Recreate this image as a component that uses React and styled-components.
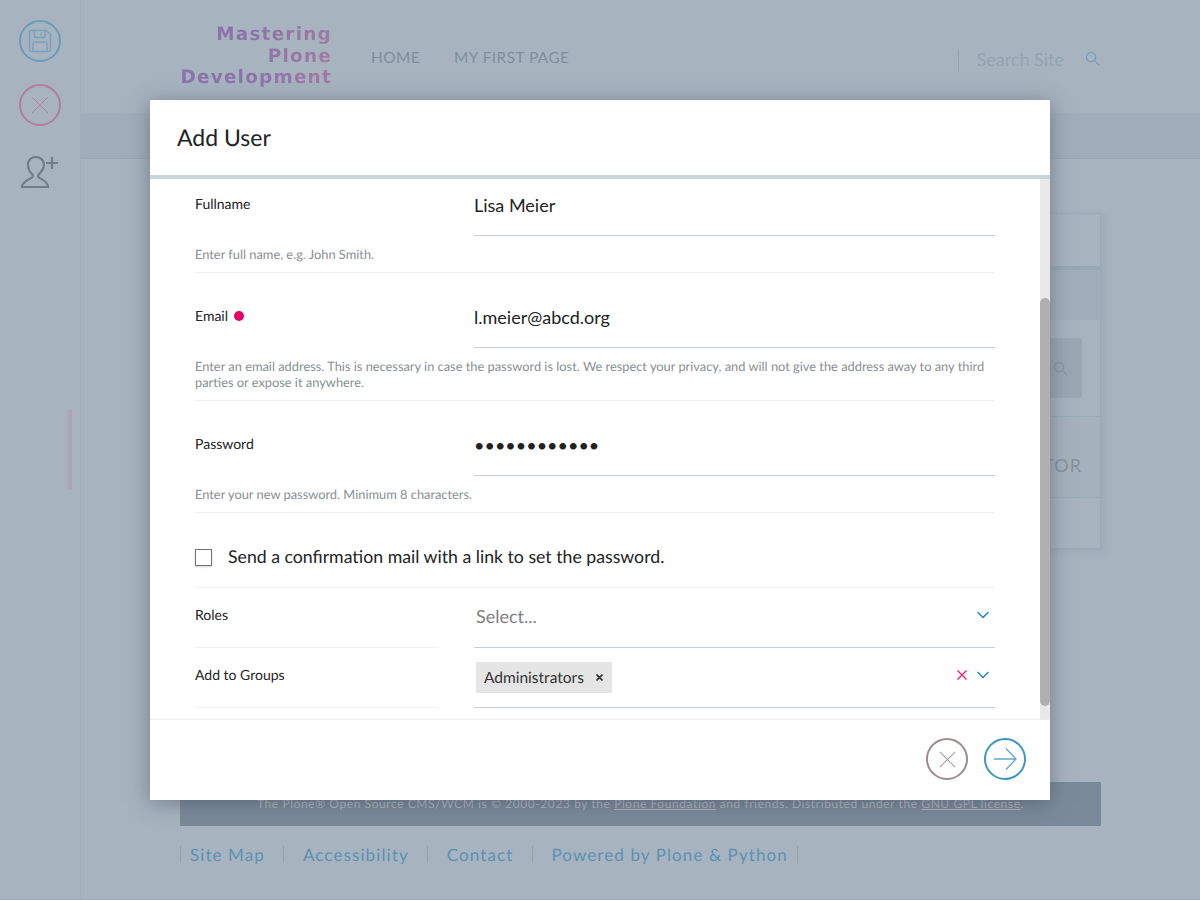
import React from 'react';
import styled, { createGlobalStyle } from 'styled-components';

const GlobalStyle = createGlobalStyle`
  html, body {
    margin: 0;
    padding: 0;
    height: 100%;
    background: #a7b3bf;
    font-family: Lato, "Liberation Sans", sans-serif;
    text-rendering: geometricPrecision;
    overflow: hidden;
  }
  * { box-sizing: border-box; }
`;

const Page = styled.div`
  position: relative;
  display: flex;
  width: 1200px;
  height: 900px;
  overflow: hidden;
  border-bottom: 1px solid #9aa8b5;
`;

/* Dimmed site behind the modal */
const Toolbar = styled.aside`
  flex: 0 0 81px;
  display: flex;
  flex-direction: column;
  align-items: center;
  padding-top: 20px;
  border-right: 1px solid #a0aeba;
`;

const ToolCircle = styled.div`
  width: 42px;
  height: 42px;
  margin-bottom: 22px;
  border-radius: 50%;
  border: 2px solid ${(props) => props.$color};
  display: flex;
  align-items: center;
  justify-content: center;
`;

const ToolUser = styled.svg`
  width: 42px;
  height: 36px;
  margin-top: 7px;
`;

const ToolMark = styled.div`
  align-self: flex-end;
  width: 4px;
  height: 80px;
  margin: 219px 8px 0 0;
  background: #aca3b3;
`;

const Site = styled.div`
  flex: 1;
  display: flex;
  flex-direction: column;
`;

const Header = styled.header`
  height: 113px;
  display: flex;
  align-items: flex-start;
  padding: 24px 100px 0 91px;
`;

const Logo = styled.div`
  width: 160px;
  white-space: nowrap;
  font-family: "DejaVu Sans", sans-serif;
  font-size: 18.4px;
  font-weight: 700;
  line-height: 21.5px;
  letter-spacing: 1.25px;
  text-align: right;
  color: transparent;
  background: linear-gradient(100deg, #8873ae 0%, #8c74a9 50%, #a47aa4 100%);
  -webkit-background-clip: text;
  background-clip: text;
`;

const Nav = styled.nav`
  display: flex;
  gap: 34px;
  margin: 24px 0 0 39px;
`;

const NavItem = styled.span`
  font-size: 15.4px;
  line-height: 20px;
  letter-spacing: 0.45px;
  color: #7f8f9f;
`;

const Search = styled.div`
  margin: 25px 0 0 auto;
  height: 23px;
  display: flex;
  align-items: center;
  padding-left: 17px;
  border-left: 1px solid #94a5b2;
`;

const SearchText = styled.span`
  font-size: 18px;
  line-height: 21px;
  margin: -2px 21px 0 0;
  color: #94a4b2;
`;

const SearchIcon = styled.svg`
  display: block;
  width: 15px;
  height: 15px;
  margin-top: ${(props) => props.$top || 0}px;
`;

const Crumbs = styled.div`
  height: 46px;
  background: #a0aebb;
  border-bottom: 1px solid #98a8b5;
`;

const Main = styled.main`
  flex: 1;
  padding: 54px 99px 0;
`;

const Panel = styled.section`
  width: 921px;
  border: 1px solid #9bacb9;
  box-shadow: 2px 2px 6px rgba(120, 135, 150, 0.25);
`;

const PanelRow = styled.div`
  height: ${(props) => props.$height}px;
  background: ${(props) => props.$bg || 'transparent'};
  border-bottom: ${(props) => props.$border || 'none'};
  display: flex;
  align-items: center;
  justify-content: flex-end;
  padding-right: 18px;
`;

const PanelSearch = styled.div`
  width: 400px;
  height: 60px;
  border-radius: 4px;
  background: #9aa8b4;
  display: flex;
  align-items: center;
  justify-content: flex-end;
  padding-right: 14px;
`;

const PanelText = styled.span`
  font-size: 18px;
  letter-spacing: 1px;
  color: #84949f;
  margin-top: 16px;
`;

const Legal = styled.div`
  margin-left: 99px;
  width: 921px;
  height: 44px;
  display: flex;
  align-items: center;
  justify-content: center;
  padding-bottom: 2px;
  background: #7b8a9a;
  color: #b0bac4;
  font-size: 12px;
  letter-spacing: 0.58px;

  u { text-underline-offset: 1px; }
`;

const FooterLinks = styled.ul`
  display: flex;
  list-style: none;
  margin: 20px 0 36px 99px;
  padding: 0;
  height: 17px;
  align-items: center;
`;

const FooterLink = styled.li`
  height: 17px;
  line-height: 17px;
  padding: 0 18.5px;
  border-left: 1px solid #94a5b2;
  font-size: 17px;
  letter-spacing: 1.1px;
  color: #5b92b2;

  &:first-child { padding-left: 9px; }
  &:last-child { border-right: 1px solid #94a5b2; padding-right: 9px; }
`;

/* Modal */
const Modal = styled.div`
  position: absolute;
  left: 150px;
  top: 100px;
  width: 900px;
  height: 700px;
  display: flex;
  flex-direction: column;
  background: #fff;
  box-shadow: 0 3px 20px rgba(60, 72, 88, 0.5);
`;

const ModalHeader = styled.div`
  flex: 0 0 79px;
  display: flex;
  align-items: center;
  padding: 0 27px 2px;
  border-bottom: 4px solid #c7d6d8;
`;

const Title = styled.h2`
  margin: 0;
  font-size: 23px;
  font-weight: 400;
  color: #222;
`;

const ModalBody = styled.div`
  position: relative;
  flex: 1;
  overflow: hidden;
`;

const Form = styled.form`
  width: 800px;
  margin: -3px 0 0 45px;
`;

const Field = styled.div`
  margin-bottom: ${(props) => (props.$tight ? 0 : 15)}px;
`;

const Row = styled.div`
  display: grid;
  grid-template-columns: 243px 521px;
  column-gap: 36px;
  height: 60px;
`;

const Label = styled.label`
  display: flex;
  align-items: flex-start;
  gap: 6px;
  padding-top: ${(props) => (props.$line ? 18 : 19)}px;
  font-size: 14px;
  line-height: 18px;
  color: #222;
  border-bottom: ${(props) => (props.$line ? '1px solid #edf1f2' : 'none')};
`;

const Required = styled.span`
  width: 10px;
  height: 10px;
  margin-top: 4px;
  border-radius: 50%;
  background: #e40166;
`;

const InputWrap = styled.div`
  position: relative;
  display: flex;
  align-items: flex-start;
  border-bottom: 1px solid #c7d0d5;
`;

const TextInput = styled.input`
  width: 100%;
  height: 24px;
  margin-top: 17px;
  padding: 0;
  border: none;
  outline: none;
  background: none;
  font-family: inherit;
  font-size: 18px;
  color: #222;
`;

const Help = styled.p`
  margin: 0;
  padding: 10px 0;
  font-size: 12.84px;
  line-height: 16px;
  color: #878f93;
  border-bottom: 1px solid #edf1f2;
`;

const CheckRow = styled.div`
  display: flex;
  align-items: center;
  gap: 16px;
  height: 75px;
  padding-top: 15px;
  border-bottom: 1px solid #edf1f2;
  font-size: 17.7px;
  color: #222;
`;

const CheckLabel = styled.span`
  margin-top: -2px;
`;

const CheckBox = styled.span`
  flex: 0 0 17px;
  height: 17px;
  border: 1px solid #7c6f70;
  box-shadow: 0 1px 2px rgba(120, 100, 100, 0.3);
`;

const Placeholder = styled.span`
  margin: 17px 0 0 2px;
  font-size: 18px;
  line-height: 22px;
  color: #808080;
`;

const Chip = styled.span`
  display: inline-flex;
  align-items: center;
  gap: 12px;
  height: 31px;
  margin: 14px 0 0 2px;
  padding: 0 9px 0 8px;
  background: #e5e5e5;
  font-size: 15.5px;
  color: #333;
`;

const ChipClose = styled.svg`
  display: block;
  width: 7px;
  height: 7px;
`;

const SelectIcons = styled.div`
  position: absolute;
  right: 6px;
  top: ${(props) => props.$top}px;
  display: flex;
  align-items: center;
  gap: 10px;
`;

const SmallIcon = styled.svg`
  display: block;
  width: ${(props) => props.$w}px;
  height: ${(props) => props.$h}px;
`;

const ScrollTrack = styled.div`
  position: absolute;
  right: 0;
  top: 0;
  bottom: 0;
  width: 10px;
  background: #e8e8e8;
`;

const ScrollThumb = styled.div`
  position: absolute;
  top: 119px;
  width: 10px;
  height: 408px;
  border-radius: 5px;
  background: #b0b0b0;
`;

const ModalFooter = styled.div`
  flex: 0 0 81px;
  display: flex;
  justify-content: flex-end;
  gap: 16px;
  padding: 18px 24px 0 0;
  border-top: 1px solid #eeeeee;
`;

const RoundButton = styled.button`
  width: 42px;
  height: 42px;
  padding: 0;
  border-radius: 50%;
  border: 2px solid ${(props) => props.$color};
  background: none;
  display: flex;
  align-items: center;
  justify-content: center;
`;

const Thin = styled.svg`
  display: block;
  width: ${(props) => props.$size}px;
  height: ${(props) => props.$size}px;
  fill: none;
  stroke: ${(props) => props.$color};
  stroke-width: ${(props) => props.$width || 1.2};
`;

function Cross({ size, color, width }) {
  return (
    <Thin $size={size} $color={color} $width={width} viewBox="0 0 20 20">
      <path d="M1 1 19 19M19 1 1 19" />
    </Thin>
  );
}

function Chevron() {
  return (
    <SmallIcon $w={12} $h={8} viewBox="0 0 12 8" fill="none" stroke="#1f7fc0" strokeWidth="1.4">
      <path d="M0.5 1 6 6.5 11.5 1" />
    </SmallIcon>
  );
}

function Magnifier({ color, top }) {
  return (
    <SearchIcon $top={top} viewBox="0 0 16 16" fill="none" stroke={color} strokeWidth="1.2">
      <circle cx="6.5" cy="6.5" r="5" />
      <path d="M10.2 10.2 15 15" />
    </SearchIcon>
  );
}

const footerLinks = ['Site Map', 'Accessibility', 'Contact', 'Powered by Plone & Python'];

function App() {
  return (
    <Page>
      <GlobalStyle />
      <Toolbar>
        <ToolCircle $color="#6a9cba">
          <svg width="24" height="24" viewBox="0 0 24 24" fill="none" stroke="#78a1bd" strokeWidth="1.4">
            <path d="M2.5 1.5H18.5L22.5 5.5V21C22.5 22 22 22.5 21 22.5H3C2 22.5 1.5 22 1.5 21V2.5C1.5 2 2 1.5 2.5 1.5Z" />
            <path d="M6.5 1.5V7.5C6.5 8 7 8.5 7.5 8.5H16C16.5 8.5 17 8 17 7.5V1.5" />
            <path d="M13 3.5V6.5" />
            <path d="M5 22.5V14C5 13.5 5.5 13 6 13H18C18.5 13 19 13.5 19 14V22.5" />
          </svg>
        </ToolCircle>
        <ToolCircle $color="#b47b9f">
          <Cross size={18} color="#b580a2" width={1} />
        </ToolCircle>
        <ToolUser viewBox="20 156 42 36" fill="none" stroke="#707e8a" strokeWidth="2.2">
          <path d="M23 188H49C49 182 43 181 40 178.5C39 177.5 39 176 40 175C43 172 45 169 45 166C45 161 41 158 37 158C32 158 28 162 29 167C29.300 170 31 173 33 175C34 176 34 177.500 33 178.500C30 181 23 182 23 188Z" />
          <path d="M53 158V170M47 164H59" />
        </ToolUser>
        <ToolMark />
      </Toolbar>

      <Site>
        <Header>
          <Logo>
            Mastering
            <br />
            Plone
            <br />
            Development
          </Logo>
          <Nav>
            <NavItem>HOME</NavItem>
            <NavItem>MY FIRST PAGE</NavItem>
          </Nav>
          <Search>
            <SearchText>Search Site</SearchText>
            <Magnifier color="#6b9fbf" top={-4} />
          </Search>
        </Header>
        <Crumbs />
        <Main>
          <Panel>
            <PanelRow $height={56} $border="4px solid #98a9b6" />
            <PanelRow $height={50} $bg="#a0aebb" />
            <PanelRow $height={97} $border="1px solid #9bacb9">
              <PanelSearch>
                <Magnifier color="#84949f" />
              </PanelSearch>
            </PanelRow>
            <PanelRow $height={81} $bg="#a5b1bd" $border="1px solid #9bacb9">
              <PanelText>ADMINISTRATOR</PanelText>
            </PanelRow>
            <PanelRow $height={50} />
          </Panel>
        </Main>
        <Legal>
          <span>
            The Plone® Open Source CMS/WCM is © 2000-2023 by the <u>Plone Foundation</u> and friends. Distributed
            under the <u>GNU GPL license</u>.
          </span>
        </Legal>
        <FooterLinks>
          {footerLinks.map((link) => (
            <FooterLink key={link}>{link}</FooterLink>
          ))}
        </FooterLinks>
      </Site>

      <Modal>
        <ModalHeader>
          <Title>Add User</Title>
        </ModalHeader>
        <ModalBody>
          <Form>
            <Field>
              <Row>
                <Label>Fullname</Label>
                <InputWrap>
                  <TextInput type="text" value="Lisa Meier" readOnly />
                </InputWrap>
              </Row>
              <Help>Enter full name, e.g. John Smith.</Help>
            </Field>
            <Field>
              <Row>
                <Label>
                  Email <Required />
                </Label>
                <InputWrap>
                  <TextInput type="text" value="l.meier@abcd.org" readOnly />
                </InputWrap>
              </Row>
              <Help>
                Enter an email address. This is necessary in case the password is lost. We respect your privacy, and
                will not give the address away to any third parties or expose it anywhere.
              </Help>
            </Field>
            <Field $tight>
              <Row>
                <Label>Password</Label>
                <InputWrap>
                  <TextInput type="password" value="lisameier123" readOnly />
                </InputWrap>
              </Row>
              <Help>Enter your new password. Minimum 8 characters.</Help>
            </Field>
            <CheckRow>
              <CheckBox />
              <CheckLabel>Send a confirmation mail with a link to set the password.</CheckLabel>
            </CheckRow>
            <Row>
              <Label $line>Roles</Label>
              <InputWrap>
                <Placeholder>Select...</Placeholder>
                <SelectIcons $top={23}>
                  <Chevron />
                </SelectIcons>
              </InputWrap>
            </Row>
            <Row>
              <Label $line>Add to Groups</Label>
              <InputWrap>
                <Chip>
                  Administrators
                  <ChipClose viewBox="0 0 7 7" fill="none" stroke="#333" strokeWidth="1.6">
                    <path d="M0.5 0.5 6.5 6.5M6.500 0.5 0.5 6.500" />
                  </ChipClose>
                </Chip>
                <SelectIcons $top={22}>
                  <Cross size={10} color="#f0146e" width={2.4} />
                  <Chevron />
                </SelectIcons>
              </InputWrap>
            </Row>
          </Form>
          <ScrollTrack>
            <ScrollThumb />
          </ScrollTrack>
        </ModalBody>
        <ModalFooter>
          <RoundButton $color="#9c8a8c">
            <Cross size={17} color="#a8989a" />
          </RoundButton>
          <RoundButton $color="#3b98c4">
            <Thin $size={24} $color="#62a9d0" $width={1.3} viewBox="0 0 24 24">
              <path d="M1 12H23M13 1.500 23 12 13 22.500" />
            </Thin>
          </RoundButton>
        </ModalFooter>
      </Modal>
    </Page>
  );
}

export default App;
